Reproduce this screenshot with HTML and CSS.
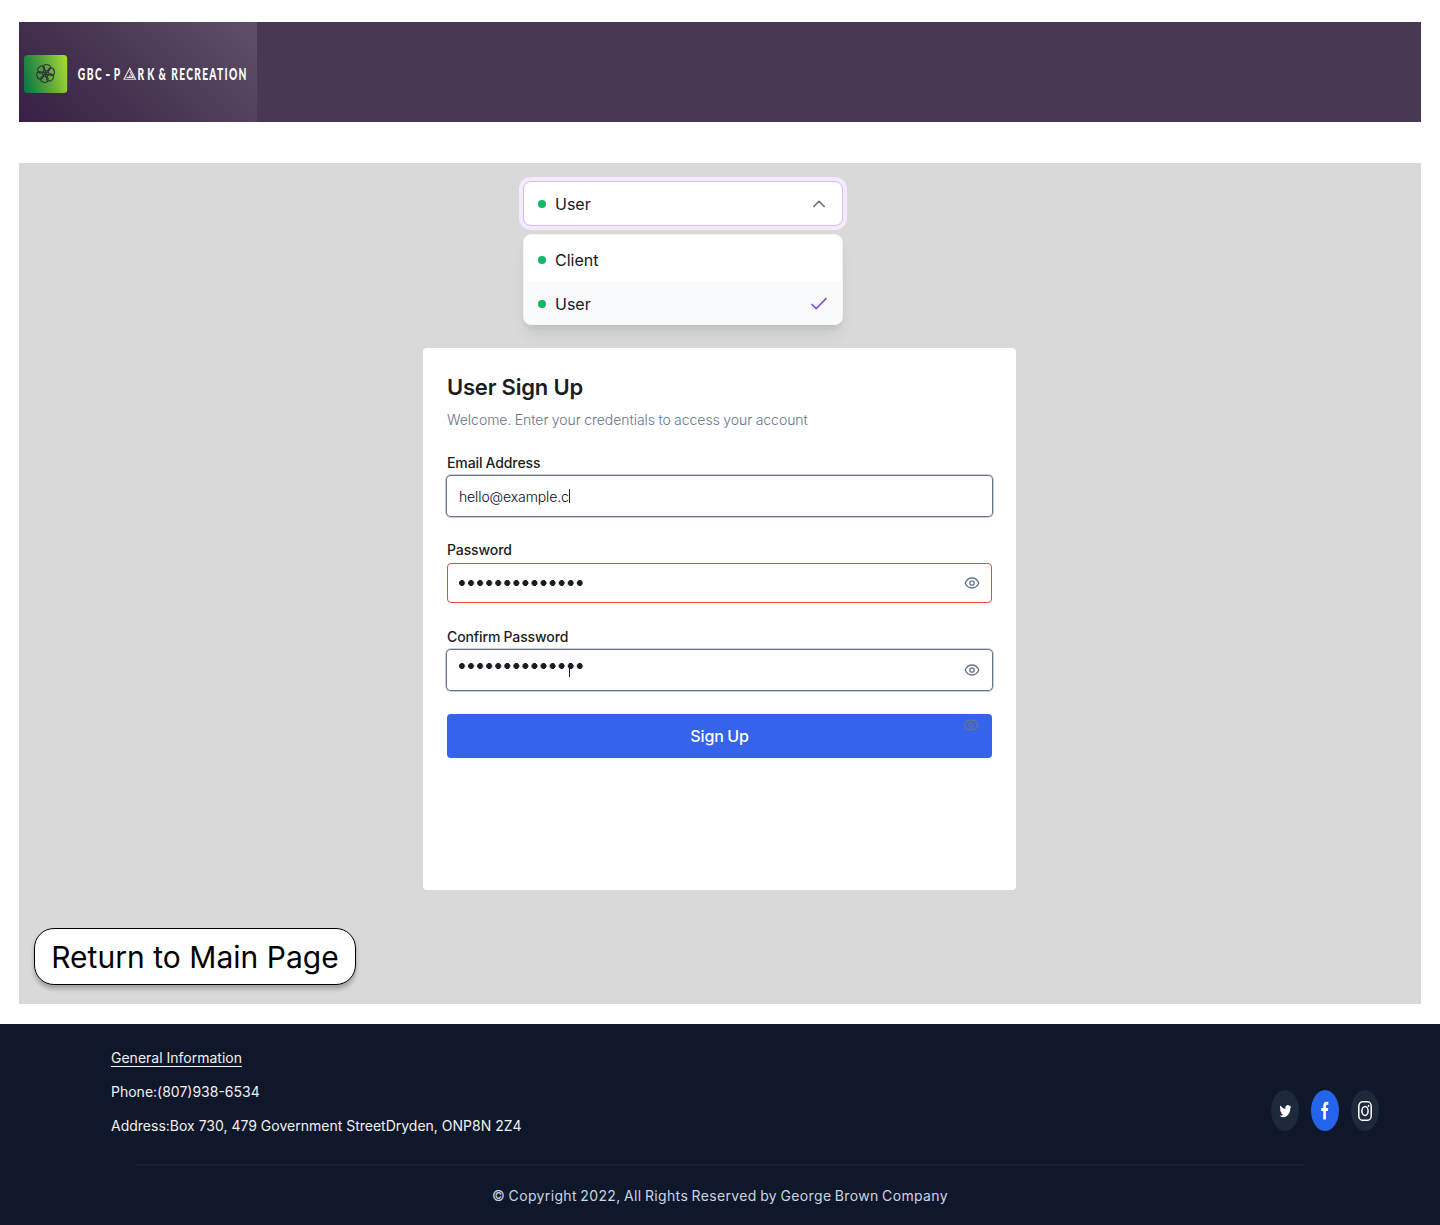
FILE: index.html
```html
<!DOCTYPE html>
<html lang="en">
<head>
<meta charset="utf-8">
<title>User Sign Up</title>
<link rel="stylesheet" href="styles.css">
</head>
<body>
<svg width="0" height="0" class="defs" aria-hidden="true">
  <symbol id="eye" viewBox="0 0 16 16">
    <path d="M1.2 8C2.6 4.7 5 3 8 3s5.400 1.700 6.800 5C13.400 11.300 11 13 8 13S2.600 11.300 1.200 8z" fill="none" stroke="currentColor" stroke-width="1.300"/>
    <circle cx="8" cy="8" r="2.200" fill="none" stroke="currentColor" stroke-width="1.300"/>
  </symbol>
</svg>
<header class="topbar">
  <a class="brand" href="#">
    <svg width="238" height="100" viewBox="0 0 238 100">
      <defs>
        <linearGradient id="leaf" x1="0" y1=".6" x2="1" y2=".4"><stop offset="0" stop-color="#0f7a45"/><stop offset=".5" stop-color="#55a33b"/><stop offset="1" stop-color="#a2d635"/></linearGradient>
      </defs>
      <rect x="5" y="33" width="43.200" height="38" rx="3.500" fill="url(#leaf)"/>
      <g fill="none" stroke="#30323f" stroke-width="1.100" transform="translate(26.600 51.500)">
        <ellipse cx="0" cy="-6" rx="3.700" ry="3" transform="rotate(12)"/>
        <ellipse cx="0" cy="-6" rx="3.700" ry="3" transform="rotate(72)"/>
        <ellipse cx="0" cy="-6" rx="3.700" ry="3" transform="rotate(132)"/>
        <ellipse cx="0" cy="-6" rx="3.700" ry="3" transform="rotate(192)"/>
        <ellipse cx="0" cy="-6" rx="3.700" ry="3" transform="rotate(252)"/>
        <ellipse cx="0" cy="-6" rx="3.700" ry="3" transform="rotate(312)"/>
        <path d="M0-3.500V3.500M-3-1.800 3 1.800M-3 1.800 3-1.800" stroke-width="1.500"/>
      </g>
      <g class="brand-text">
        <text transform="translate(58.700 58) scale(.6 1)" textLength="40">GBC</text>
        <text transform="translate(86.200 58) scale(.8 1)">-</text>
        <text transform="translate(94.700 58) scale(.6 1)">P</text>
        <text transform="translate(118.600 58) scale(.6 1)" textLength="28">RK</text>
        <text transform="translate(139.500 58) scale(.6 1)">&amp;</text>
        <text transform="translate(152.200 58) scale(.6 1)" textLength="125.500">RECREATION</text>
      </g>
      <path d="M110.800 46.200 116.600 57.300H105zM110.800 49.600l3.300 5.800h-6.600M110.800 52.800v2.600" fill="none" stroke="#e6e1e8" stroke-width="1.100"/>
    </svg>
  </a>
</header>

<main class="stage">
  <div class="select">
    <div class="select-trigger">
      <span class="dot"></span><span class="label">User</span>
      <svg width="20" height="20" viewBox="0 0 20 20"><path d="M4.800 12.500 10 7.300l5.200 5.200" fill="none" stroke="#667085" stroke-width="1.600" stroke-linecap="round" stroke-linejoin="round"/></svg>
    </div>
    <div class="select-menu">
      <div class="option"><span class="dot"></span><span class="label">Client</span></div>
      <div class="option selected"><span class="dot"></span><span class="label">User</span>
        <svg width="20" height="20" viewBox="0 0 20 20"><path d="M3 10.500 7.200 14.700 17 4.700" fill="none" stroke="#7f56d9" stroke-width="1.700" stroke-linecap="round" stroke-linejoin="round"/></svg>
      </div>
    </div>
  </div>

  <form class="card">
    <h1>User Sign Up</h1>
    <p class="intro">Welcome. Enter your credentials to access your account</p>
    <div class="field">
      <span class="caption">Email Address</span>
      <div class="input active"><span class="value">hello@example.c</span><i class="caret"></i></div>
    </div>
    <div class="field">
      <span class="caption">Password</span>
      <div class="input error">
        <span class="mask"></span>
        <svg class="eye" width="16" height="16"><use href="#eye"/></svg>
      </div>
    </div>
    <div class="field">
      <span class="caption">Confirm Password</span>
      <div class="input active raised">
        <span class="mask"></span><i class="caret over"></i>
        <svg class="eye" width="16" height="16"><use href="#eye"/></svg>
      </div>
    </div>
    <div class="submit"><span>Sign Up</span><svg class="ghost-eye" width="16" height="16"><use href="#eye"/></svg></div>
  </form>

  <a class="return" href="#"><span>Return to Main Page</span></a>
</main>

<footer class="footer">
  <div class="footer-top">
    <div class="info">
      <span class="info-title">General Information</span>
      <span>Phone:(807)938-6534</span>
      <span>Address:Box 730, 479 Government StreetDryden, ONP8N 2Z4</span>
    </div>
    <div class="social">
      <a href="#" class="pill"><svg width="12" height="15" viewBox="-1 -1 24 24" preserveAspectRatio="none"><path fill="#fff" d="M24 4.600a10 10 0 0 1-2.800.8 5 5 0 0 0 2.100-2.700c-.9.500-2 1-3.100 1.200a4.900 4.900 0 0 0-8.400 4.500A14 14 0 0 1 1.700 3.100a4.900 4.900 0 0 0 1.500 6.600 5 5 0 0 1-2.200-.6v.1a4.900 4.900 0 0 0 3.900 4.800 5 5 0 0 1-2.200.1 4.900 4.900 0 0 0 4.600 3.400A9.900 9.900 0 0 1 0 19.500a14 14 0 0 0 21.500-12.400 10 10 0 0 0 2.500-2.500z"/></svg></a>
      <a href="#" class="pill blue"><svg width="8" height="19" viewBox="0 0 8 19"><path fill="#fff" d="M2.300 18.500V10H.3V6.900h2V4.600C2.300 2 3.600.7 5.700.7c.7 0 1.300 0 1.600.1v3H6.100c-1 0-1.200.6-1.200 1.400v1.700h2.300L6.900 10h-2v8.500z"/></svg></a>
      <a href="#" class="pill"><svg width="14" height="20" viewBox="0 0 14 20" fill="none" stroke="#fff" stroke-width="1.500"><rect x=".8" y=".8" width="12.400" height="18.400" rx="3.500" ry="4.500"/><ellipse cx="7" cy="10" rx="3.100" ry="4.400"/><ellipse cx="10.500" cy="4.900" rx=".6" ry=".8" fill="#fff" stroke-width=".6"/></svg></a>
    </div>
  </div>
  <div class="copyright"><span>© Copyright 2022, All Rights Reserved by George Brown Company</span></div>
</footer>
</body>
</html>
```
FILE: styles.css
```css
* { box-sizing: border-box; }
body { margin: 0; padding-top: 22px; background: #fff; font-family: Inter, sans-serif; color: #101828; }
a { color: inherit; text-decoration: none; }
.defs { display: block; height: 0; }
span { white-space: nowrap; }

.topbar { margin: 0 19px; height: 100px; background: #493854; }
.brand { display: block; width: 238px; height: 100px; background: linear-gradient(45deg, #382044 0%, #493854 50%, #5f5069 100%); }
.brand svg { display: block; overflow: visible; }
.brand-text { font: 900 17px Lato, sans-serif; fill: #fff; }

.stage { margin: 41px 19px 0; height: 841px; padding-top: 18px; background: #d9d9d9; }
.select { width: 320px; margin-left: 504px; font-size: 16px; line-height: 24px; }
.select-trigger { display: flex; align-items: center; height: 45px; padding: 0 13px 0 14px; background: #fff; border: 1px solid #d6bbfb; border-radius: 8px; box-shadow: 0 0 0 4px #f4ebff; }
.select-menu { margin-top: 8px; height: 91px; padding-top: 2px; background: #fff; border-radius: 8px; overflow: hidden; border: 1px solid #f2f4f7; box-shadow: 0 12px 16px -4px rgba(16, 60, 40, .1), 0 4px 6px -2px rgba(16, 24, 40, .08); }
.option { display: flex; align-items: center; height: 44px; padding: 1px 13px 0 14px; }
.selected { background: #f9fafb; }
.dot { width: 8px; height: 8px; margin-right: 9px; border-radius: 50%; background: #12b76a; }
.label { flex: 1; }

.card { width: 593px; height: 542px; margin: 23px 0 0 404px; padding: 24px; background: #fff; border-radius: 4px; color: #191d23; }
h1 { margin: 0; font-size: 22px; line-height: 30px; font-weight: 600; letter-spacing: -.2px; }
.intro { margin: 8px 0 0; font-size: 14px; line-height: 20px; font-weight: 300; color: #64748b; letter-spacing: -.03px; word-spacing: -.5px; }
.field { margin-top: 24px; }
.intro + .field { margin-top: 23px; }
.caption { display: block; height: 23px; font-size: 14px; line-height: 20px; font-weight: 500; letter-spacing: -.1px; word-spacing: -.5px; }
.input { display: flex; align-items: center; height: 40px; padding: 0 11px; border: 1px solid #fff; border-radius: 4px; position: relative; }
.active { box-shadow: 0 0 0 1px #64748b, 0 0 0 2px #c9d0d9; }
.error { border-color: #ef4444; }
.value { font-size: 14px; font-weight: 300; color: #0c0e12; letter-spacing: -.12px; }
.caret { width: 1px; height: 14px; background: #191d23; }
.over { position: absolute; left: 121px; top: 12px; }
.mask { width: 126px; height: 6px; background: radial-gradient(circle at 3px 3px, #191d23 2.700px, transparent 3.200px) 0 0 / 9.070px 6px repeat-x; }
.raised .mask { margin-bottom: 9px; }
.eye { margin-left: auto; color: #64748b; }
.submit { display: flex; align-items: center; justify-content: center; position: relative; margin-top: 24px; height: 44px; background: #3563e9; border-radius: 4px; color: #fff; font-size: 16px; font-weight: 500; letter-spacing: -.1px; word-spacing: -.7px; }
.ghost-eye { position: absolute; right: 13px; top: 3px; color: #64748b; }

.return { display: flex; align-items: center; justify-content: center; width: 322px; height: 57px; margin: 38px 0 0 15px; background: #fff; border: 1px solid #000; border-radius: 20px; box-shadow: 0 4px 4px rgba(0, 0, 0, .25); color: #000; font-size: 30px; letter-spacing: .03px; }

.footer { margin-top: 20px; height: 201px; background: #0f172a; }
.footer-top { display: flex; justify-content: space-between; height: 140px; padding: 24px 61px 0 111px; }
.info { display: flex; flex-direction: column; align-items: flex-start; gap: 14px; color: #f1f1f1; font-size: 14px; line-height: 20px; }
.info-title { text-decoration: underline; text-underline-offset: 3px; }
.social { display: flex; gap: 12px; padding-top: 42px; }
.pill { display: flex; align-items: center; justify-content: center; width: 28px; height: 41px; border-radius: 50%; background: #1e293b; }
.blue { background: #2563eb; }
.copyright { margin: 0 136px; padding-top: 20px; border-top: 2px solid #172033; text-align: center; color: #cbd5e1; font-size: 14px; line-height: 20px; letter-spacing: .36px; word-spacing: -.9px; }
```
